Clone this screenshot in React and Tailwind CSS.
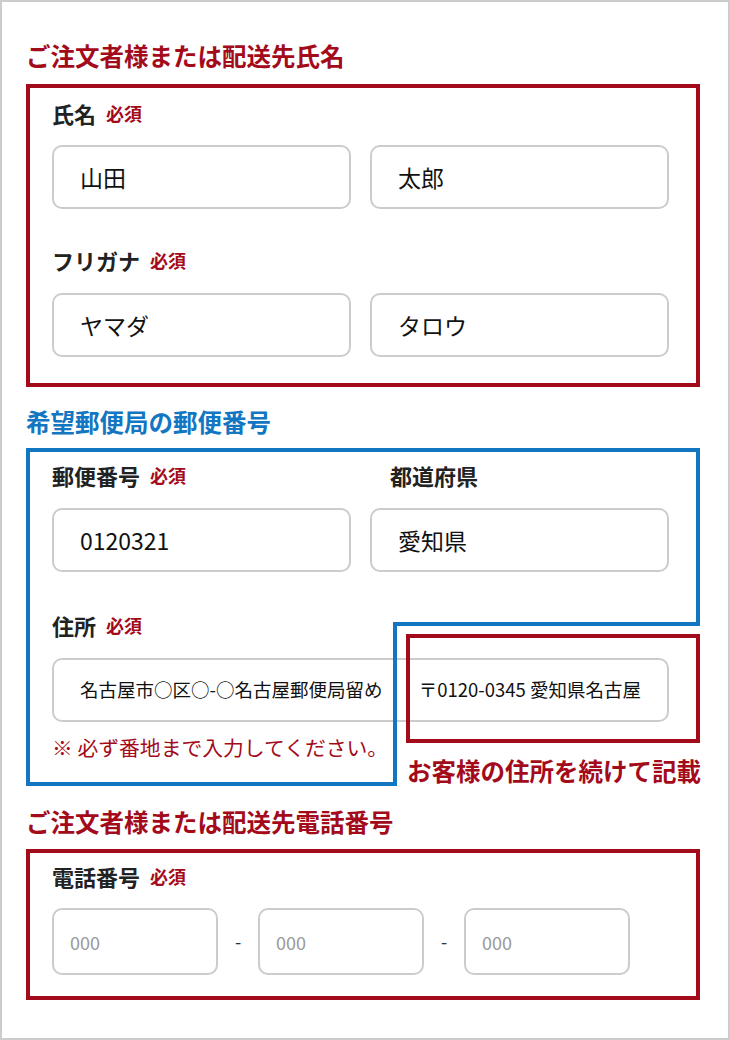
import React from 'react';

const Required = () => (
  <span className="text-[18px] leading-[28px] font-bold text-[#a30b1b]">必須</span>
);

const Label = ({ children, required, className = '' }) => (
  <div className={`flex items-center h-[28px] gap-[10px] ${className}`}>
    <span className="text-[22px] leading-[28px] font-bold text-[#222222]">{children}</span>
    {required && <Required />}
  </div>
);

const Field = ({ value, className = '' }) => (
  <input
    type="text"
    readOnly
    defaultValue={value}
    className={`block w-full h-[64px] rounded-[10px] border-2 border-[#cccccc] bg-white pl-[26px] text-[23px] text-[#111111] outline-none ${className}`}
  />
);

const PhoneField = () => (
  <input
    type="text"
    placeholder="000"
    className="block w-[166px] h-[67px] rounded-[10px] border-2 border-[#cccccc] bg-white pl-4 text-[18px] text-[#111111] placeholder:text-[#999999] outline-none"
  />
);

const App = () => {
  return (
    <div className="w-[730px] h-[1040px] border-2 border-[#cccccc] bg-white pl-6 pr-7 pt-[38px] font-['Noto_Sans_CJK_JP','Noto_Sans',sans-serif]">
      {/* 氏名 */}
      <h2 className="text-[24.5px] leading-[32px] font-bold text-[#a30b1b] mb-[12px]">ご注文者様または配送先氏名</h2>
      <div className="border-4 border-[#a30b1b] pt-[11px] pb-[26px] pl-[22px] pr-[27px]">
        <Label required>氏名</Label>
        <div className="grid grid-cols-2 gap-[19px] mt-[18px]">
          <Field value="山田" />
          <Field value="太郎" />
        </div>
        <Label required className="mt-[37px]">フリガナ</Label>
        <div className="grid grid-cols-2 gap-[19px] mt-[19px]">
          <Field value="ヤマダ" />
          <Field value="タロウ" />
        </div>
      </div>

      {/* 郵便番号・住所 */}
      <h2 className="text-[24.5px] leading-[32px] font-bold text-[#1276c2] mt-[19px] mb-[10px]">希望郵便局の郵便番号</h2>
      <div className="relative h-[338px] pt-[13px] pl-[26px] pr-[31px]">
        <div className="grid grid-cols-2 gap-x-[19px]">
          <div>
            <Label required>郵便番号</Label>
            <Field value="0120321" className="mt-[19px]" />
          </div>
          <div>
            <Label className="pl-5">都道府県</Label>
            <Field value="愛知県" className="mt-[19px]" />
          </div>
        </div>
        <Label required className="mt-[39px]">住所</Label>
        <div className="mt-[19px] h-[64px] rounded-[10px] border-2 border-[#cccccc] flex items-center justify-between px-[26px] text-[18.5px] text-[#111111]">
          <span>名古屋市○区○-○名古屋郵便局留め</span>
          <span>〒0120-0345 愛知県名古屋</span>
        </div>
        <p className="mt-[11px] text-[20.8px] leading-[28px] text-[#a30b1b]">※ 必ず番地まで入力してください。</p>

        {/* annotations */}
        <svg className="absolute inset-0 pointer-events-none" width="674" height="338" viewBox="0 0 674 338">
          <path d="M2 2 H672 V176 H369 V336 H2 Z" fill="none" stroke="#1276c2" strokeWidth="4" strokeLinejoin="miter" />
        </svg>
        <div className="absolute left-[380px] top-[186px] w-[294px] h-[109px] border-4 border-[#a30b1b]" />
        <div className="absolute left-[381px] top-[307px] text-[24.5px] leading-[32px] font-bold text-[#a30b1b] whitespace-nowrap">
          お客様の住所を続けて記載
        </div>
      </div>

      {/* 電話番号 */}
      <h2 className="text-[24.5px] leading-[32px] font-bold text-[#a30b1b] mt-[20px] mb-[11px]">ご注文者様または配送先電話番号</h2>
      <div className="border-4 border-[#a30b1b] pt-[9px] pb-[21px] pl-[22px] pr-[27px]">
        <Label required>電話番号</Label>
        <div className="flex items-center mt-[18px]">
          <PhoneField />
          <span className="w-[40px] text-center text-[18px] text-[#333333]">-</span>
          <PhoneField />
          <span className="w-[40px] text-center text-[18px] text-[#333333]">-</span>
          <PhoneField />
        </div>
      </div>
    </div>
  );
};

export default App;
